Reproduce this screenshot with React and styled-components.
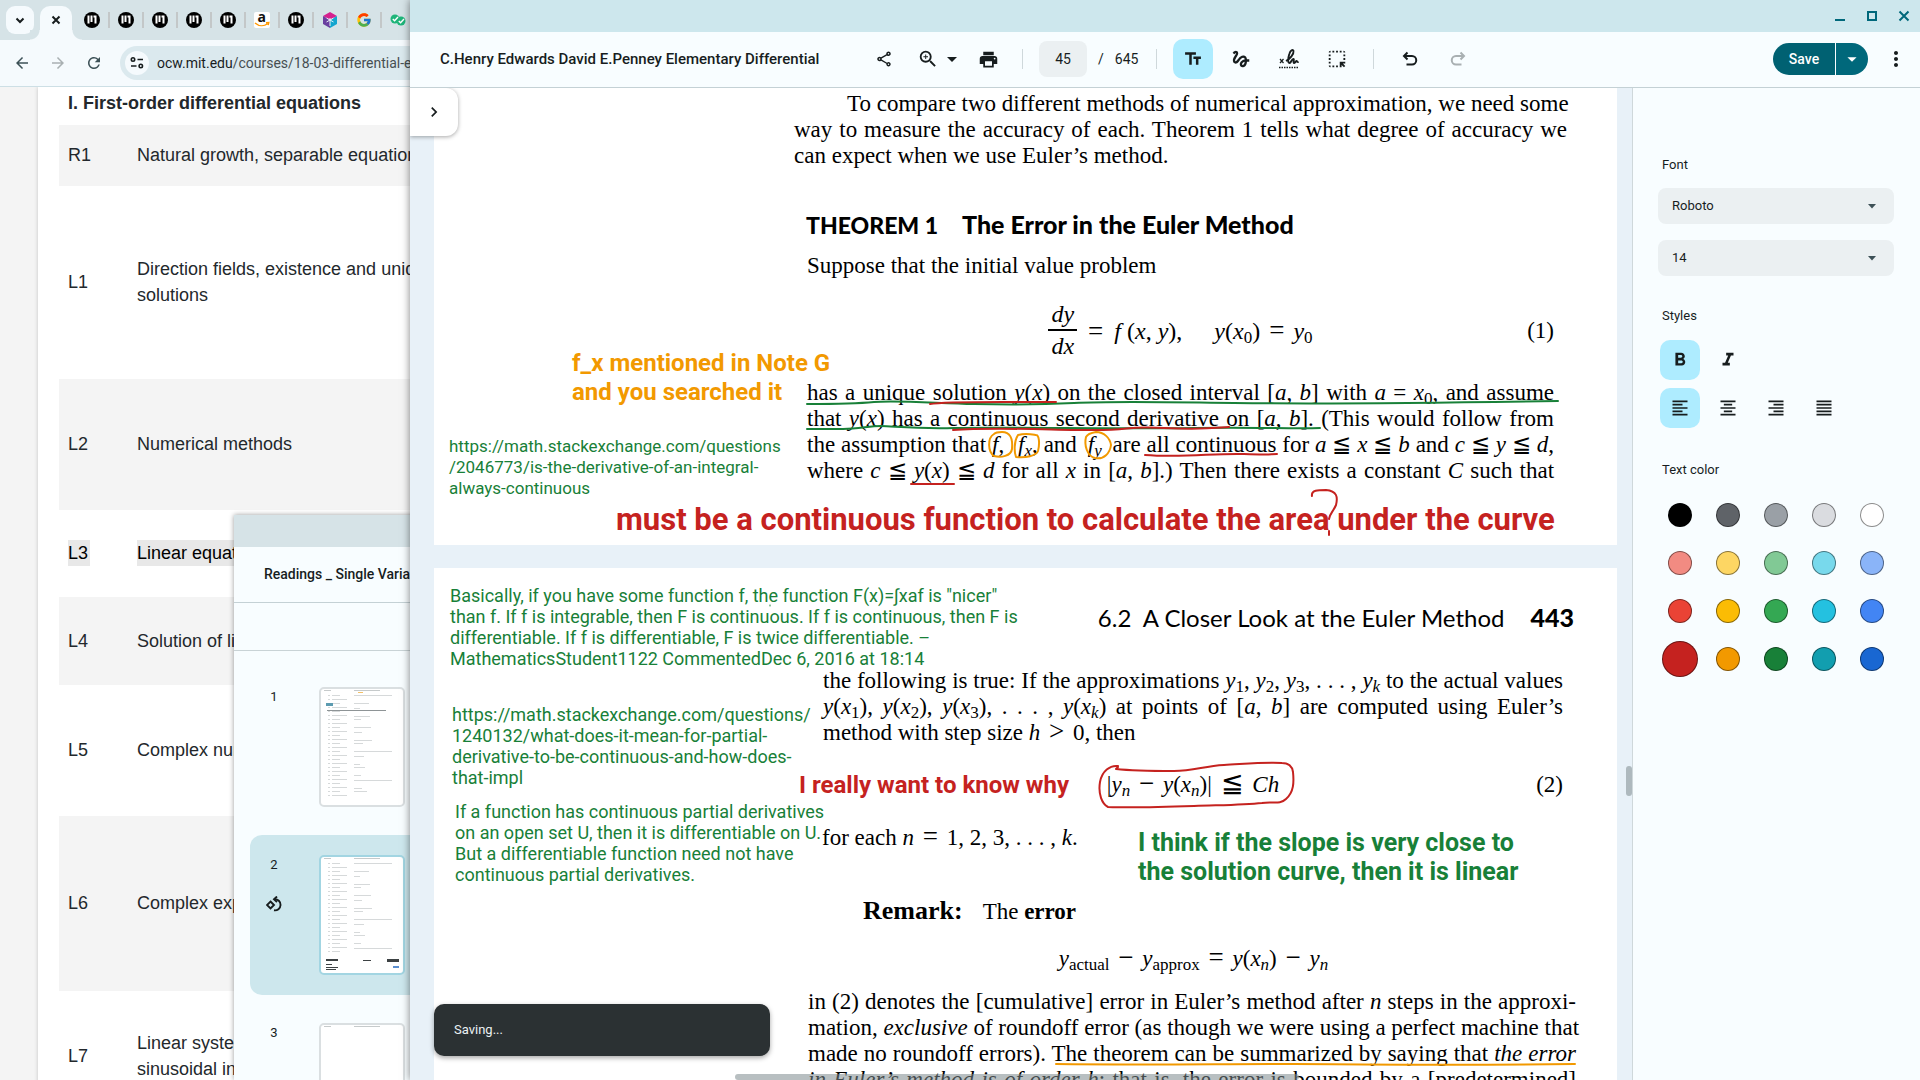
import React from "react";
import styled, { createGlobalStyle } from "styled-components";
import {
  MdOutlineShare, MdZoomIn, MdArrowDropDown, MdPrint, MdTextFields, MdGesture,
  MdHighlightAlt, MdFormatBold, MdFormatItalic, MdFormatAlignLeft, MdFormatAlignCenter,
  MdFormatAlignRight, MdFormatAlignJustify, MdMoreVert,
  MdArrowBack, MdArrowForward, MdRefresh, MdChevronRight,
} from "react-icons/md";
import { FcGoogle } from "react-icons/fc";

const UI = `Roboto, "Noto Sans", sans-serif`;
const SERIF = `"Liberation Serif", "DejaVu Serif", serif`;
const GREEN = "#188038";
const RED = "#c5221f";
const ORANGE = "#f29900";

const Global = createGlobalStyle`
  *, *::before, *::after { box-sizing: border-box; }
  body { margin: 0; overflow: hidden; font-family: ${UI}; color: #171d1e; }
  button, input, select { font: inherit; color: inherit; }
  button { border: 0; background: none; padding: 0; cursor: pointer; }
`;

const Desktop = styled.div`
  position: relative;
  height: 100vh;
  overflow: hidden;
  background: #f4f4f4;
`;

/* ---------- browser window ---------- */

const Browser = styled.section`
  position: absolute;
  inset: 0;
  display: flex;
  flex-direction: column;
`;

const TabStrip = styled.div`
  display: flex;
  align-items: flex-end;
  height: 40px;
  padding-left: 6px;
  background: #d6e3e7;
`;

const TabSearch = styled.button`
  display: grid;
  place-items: center;
  width: 28px;
  height: 28px;
  margin: 0 6px 6px 0;
  border-radius: 9px;
  background: #f5fafd;
`;

const ActiveTab = styled.button`
  position: relative;
  display: grid;
  place-items: center;
  width: 32px;
  height: 34px;
  padding-bottom: 6px;
  border-radius: 10px 10px 0 0;
  background: #f5fafd;
  &::before, &::after {
    content: "";
    position: absolute;
    bottom: 0;
    width: 10px;
    height: 10px;
  }
  &::before { left: -10px; background: radial-gradient(circle at 0 0, #d6e3e7 9px, #f5fafd 10px); }
  &::after { right: -10px; background: radial-gradient(circle at 100% 0, #d6e3e7 9px, #f5fafd 10px); }
`;

const Tab = styled.button`
  display: flex;
  align-items: center;
  justify-content: space-between;
  width: 34px;
  height: 16px;
  margin-bottom: 12px;
  padding-left: 8px;
  flex: none;
  &::after { content: ""; width: 2px; height: 16px; background: #c3c7c8; }
`;

const Tabs = styled.div`
  display: flex;
  padding-left: 4px;
`;

const NavBar = styled.div`
  display: flex;
  align-items: center;
  gap: 16px;
  height: 47px;
  padding: 0 8px 0 12px;
  background: #f5fafd;
  border-bottom: 1px solid #cddfe5;
`;

const NavButton = styled.button`
  display: grid;
  place-items: center;
  width: 20px;
  height: 20px;
  color: ${(p) => (p.$dim ? "#a9b0b2" : "#3d5157")};
`;

const Omnibox = styled.div`
  display: flex;
  flex: 1;
  align-items: center;
  gap: 8px;
  height: 34px;
  padding-left: 5px;
  border-radius: 17px;
  background: #dbe9ee;
`;

const SiteInfo = styled.button`
  display: grid;
  place-items: center;
  width: 24px;
  height: 24px;
  border-radius: 50%;
  background: #f5fafd;
`;

const Url = styled.div`
  font-size: 14px;
  line-height: 20px;
  color: #474f52;
  b { font-weight: 400; color: #171d1e; }
`;

const WebPage = styled.main`
  flex: 1;
  overflow: hidden;
  padding-left: 38px;
  background: #f4f4f4;
`;

const Sheet = styled.div`
  min-height: 100%;
  padding-left: 21px;
  background: #fff;
  box-shadow: 0 0 4px rgba(0, 0, 0, 0.2);
`;

const Syllabus = styled.table`
  width: 100%;
  border-collapse: collapse;
  font: 18px/26px "Liberation Sans", Arial, sans-serif;
  color: #23282c;
  th { height: 38px; padding: 0 9px 6px; text-align: left; font-weight: 700; }
  td { padding: 0 9px 1px; }
  td:first-child { width: 69px; }
`;

const Session = styled.tr`
  height: ${(p) => p.$height}px;
  background: ${(p) => (p.$shaded ? "#f4f4f4" : "#fff")};
`;

const Mark = styled.span`
  display: inline-block;
  padding-right: ${(p) => (p.$on ? 2 : 0)}px;
  background: ${(p) => (p.$on ? "#e8e8e8" : "none")};
  color: ${(p) => (p.$on ? "#000" : "inherit")};
`;

/* ---------- background document viewer ---------- */

const ReadingsWindow = styled.section`
  position: absolute;
  left: 234px;
  right: 800px;
  top: 515px;
  bottom: 0;
  display: flex;
  flex-direction: column;
  overflow: hidden;
  background: #f8fdff;
  box-shadow: 0 0 5px rgba(0, 0, 0, 0.4);
`;

const ReadingsFrame = styled.div`
  height: 32px;
  flex: none;
  background: #d6e3e7;
`;

const ReadingsTitle = styled.header`
  height: 56px;
  flex: none;
  padding: 17px 30px;
  font-size: 14px;
  line-height: 20px;
  font-weight: 500;
  border-bottom: 1px solid #c4d1d5;
`;

const ReadingsTools = styled.div`
  height: 48px;
  flex: none;
  margin-bottom: 16px;
  border-bottom: 1px solid #c9d3d6;
`;

const ThumbRow = styled.button`
  display: flex;
  align-items: flex-start;
  flex: none;
  gap: 37px;
  height: 160px;
  margin: 0 16px 8px;
  padding: 20px 16px;
  border-radius: 12px;
  background: ${(p) => (p.$selected ? "#cde7ed" : "none")};
`;

const ThumbSide = styled.div`
  display: flex;
  flex-direction: column;
  align-items: center;
  gap: 21px;
  width: 16px;
  font-size: 13px;
  line-height: 20px;
`;

const Thumb = styled.div`
  width: 86px;
  height: 120px;
  border: 2px solid ${(p) => (p.$selected ? "#a2d5e2" : "#dadfe1")};
  border-radius: 5px;
  background: #fff;
  overflow: hidden;
`;

/* ---------- foreground document viewer ---------- */

const Viewer = styled.section`
  position: absolute;
  left: 410px;
  right: 0;
  top: 0;
  bottom: 0;
  display: flex;
  flex-direction: column;
  background: #f8fdff;
  box-shadow: 0 0 8px rgba(0, 0, 0, 0.5);
`;

const TitleBar = styled.div`
  display: flex;
  justify-content: flex-end;
  align-items: center;
  gap: 16px;
  height: 32px;
  padding-right: 8px;
  background: #cde7ed;
  color: #00687b;
`;

const WindowButton = styled.button`
  display: grid;
  place-items: center;
  width: 16px;
  height: 16px;
`;

const Toolbar = styled.header`
  display: flex;
  align-items: center;
  height: 56px;
  padding: 0 12px 1px 30px;
  border-bottom: 1px solid #c4d1d5;
`;

const DocTitle = styled.h1`
  width: 432px;
  margin: 0;
  font-size: 15px;
  line-height: 20px;
  font-weight: 500;
`;

const ToolGroup = styled.div`
  display: flex;
  align-items: center;
  gap: ${(p) => p.$gap}px;
`;

const Tool = styled.button`
  display: grid;
  place-items: center;
  width: ${(p) => p.$width || 24}px;
  height: 40px;
  border-radius: 10px;
  background: ${(p) => (p.$active ? "#aeecff" : "none")};
  color: ${(p) => (p.$dim ? "#a9b0b2" : "#171d1e")};
`;

const Divider = styled.span`
  width: 1px;
  height: 20px;
  margin: 0 ${(p) => p.$after}px 0 ${(p) => p.$before}px;
  background: #cfd8db;
`;

const PageCount = styled.label`
  display: flex;
  align-items: center;
  gap: 11px;
  font-size: 14px;
  line-height: 20px;
`;

const PageInput = styled.input`
  width: 48px;
  height: 36px;
  border: 0;
  border-radius: 8px;
  background: #ebf0f2;
  text-align: center;
`;

const SaveGroup = styled.div`
  display: flex;
  gap: 1px;
  margin-left: auto;
  margin-right: 16px;
`;

const SaveButton = styled.button`
  display: grid;
  place-items: center;
  width: ${(p) => (p.$menu ? 32 : 62)}px;
  height: 32px;
  border-radius: ${(p) => (p.$menu ? "0 16px 16px 0" : "16px 0 0 16px")};
  background: ${(p) => (p.$menu ? "#00687b" : "#006172")};
  color: #fff;
  font-size: 14px;
  font-weight: 500;
`;

const Body = styled.div`
  display: flex;
  flex: 1;
  min-height: 0;
`;

const Canvas = styled.main`
  position: relative;
  flex: 1;
  display: flex;
  flex-direction: column;
  gap: 23px;
  overflow: hidden;
  padding: 0 15px 0 24px;
  background: #e8f1f8;
`;

const PanelToggle = styled.button`
  position: absolute;
  left: 0;
  top: 0;
  display: grid;
  place-items: center;
  width: 48px;
  height: 48px;
  border-radius: 0 12px 12px 0;
  background: #fff;
  box-shadow: 0 1px 4px rgba(0, 0, 0, 0.35);
`;

const ScrollThumb = styled.div`
  position: absolute;
  border-radius: 3px;
  background: rgba(125, 138, 142, 0.55);
`;

const VThumb = styled(ScrollThumb)`
  right: 0;
  top: 678px;
  width: 6px;
  height: 30px;
`;

const HThumb = styled(ScrollThumb)`
  left: 325px;
  bottom: 0;
  width: 564px;
  height: 6px;
`;

const Snackbar = styled.div`
  position: absolute;
  left: 24px;
  bottom: 24px;
  width: 336px;
  padding: 16px 20px;
  border-radius: 10px;
  background: #2b3133;
  color: #ecf2f4;
  font-size: 13px;
  line-height: 20px;
  box-shadow: 0 2px 5px rgba(0, 0, 0, 0.35);
`;

/* ---------- printed pages ---------- */

const Page = styled.article`
  position: relative;
  flex: none;
  display: flow-root;
  padding-bottom: ${(p) => p.$bottom || 0}px;
  background: #fff;
  color: #000;
  font: 23px/26px ${SERIF};
`;

const Block = styled.div`
  margin: ${(p) => p.$top}px ${(p) => p.$right}px 0 ${(p) => p.$left}px;
`;

const Line = styled.p`
  margin: 0;
  padding-left: ${(p) => p.$indent || 0}px;
  white-space: nowrap;
  text-align: left;
  text-align-last: ${(p) => (p.$ragged ? "left" : "justify")};
  sub { font-size: 17px; line-height: 0; vertical-align: -4px; }
`;

const Ringed = styled.span`
  padding: 0 ${(p) => p.$space}px;
`;

const Op = styled.span`
  padding: 0 3px;
  font-size: 27px;
  line-height: 0;
`;

const TheoremTitle = styled.h2`
  display: flex;
  align-items: baseline;
  gap: 24px;
  margin: 0;
  font: 900 25px/26px Lato, sans-serif;
  span:first-child { font-size: 23px; }
`;

const RunningHead = styled.header`
  display: flex;
  justify-content: flex-end;
  align-items: baseline;
  gap: 26px;
  font: 400 24px/26px Lato, sans-serif;
  span { white-space: pre; }
  b { font-size: 25px; font-weight: 900; }
`;

const Equation = styled.div`
  display: grid;
  grid-template-columns: 1fr auto 1fr;
  align-items: center;
  min-height: 26px;
  > :first-child { grid-column: 2; }
  > :last-child:not(:first-child) { justify-self: end; }
  sub { font-size: 17px; line-height: 0; vertical-align: -4px; }
`;

const Formula = styled.div`
  display: flex;
  align-items: center;
  gap: 8px;
  white-space: nowrap;
  font-size: ${(p) => (p.$large ? 24 : 23)}px;
`;

const Fraction = styled.span`
  display: flex;
  flex-direction: column;
  align-items: center;
  font-style: italic;
  line-height: 31px;
  span:first-child { border-bottom: 2px solid #000; line-height: 29px; padding: 0 3px; }
`;

const Spaced = styled.span`
  padding-left: 24px;
`;

const Remark = styled.p`
  display: flex;
  align-items: baseline;
  gap: 20px;
  margin: 0 0 0 41px;
  > b { font-size: 26px; }
`;

/* ---------- annotations over the pages ---------- */

const Note = styled.div`
  position: absolute;
  left: ${(p) => p.$x}px;
  top: ${(p) => p.$y}px;
  color: ${(p) => p.$color || GREEN};
  font-family: ${UI};
  font-size: ${(p) => p.$size || 18}px;
  line-height: ${(p) => (p.$size > 30 ? 36 : p.$size > 20 ? 29 : 21)}px;
  font-weight: ${(p) => (p.$size > 20 ? 700 : 400)};
  white-space: pre;
`;

const Ink = styled.svg`
  position: absolute;
  left: 0;
  top: 0;
  width: 1183px;
  height: 100%;
  pointer-events: none;
  fill: none;
  stroke-width: 2;
  stroke-linecap: round;
  stroke-linejoin: round;
`;

/* ---------- formatting panel ---------- */

const Panel = styled.aside`
  width: 288px;
  flex: none;
  padding: 67px 26px 0 25px;
  border-left: 1px solid #cfd8db;
  background: #f8fdff;
  font-size: 13px;
  line-height: 20px;
`;

const PanelLabel = styled.div`
  display: block;
  margin: 0 0 ${(p) => p.$after}px 4px;
`;

const SelectWrap = styled.div`
  position: relative;
  margin-bottom: ${(p) => p.$after}px;
`;

const Select = styled.select`
  appearance: none;
  display: block;
  width: 100%;
  height: 36px;
  padding: 0 14px;
  border: 0;
  border-radius: 8px;
  background: #ebf0f2;
`;

const CaretIcon = styled.svg`
  position: absolute;
  right: 18px;
  bottom: 15px;
  pointer-events: none;
  color: #3d5157;
`;

const StyleRow = styled.div`
  display: flex;
  gap: 8px;
  margin: 0 0 ${(p) => p.$after}px 2px;
`;

const Swatches = styled.fieldset`
  display: grid;
  grid-template-columns: repeat(5, 48px);
  grid-auto-rows: 48px;
  margin: 0 0 0 -2px;
  padding: 0;
  border: 0;
  place-items: center;
`;

const Swatch = styled.input`
  appearance: none;
  width: 24px;
  height: 24px;
  margin: 0;
  border: 1px solid rgba(0, 0, 0, 0.45);
  border-radius: 50%;
  background: ${(p) => p.$color};
  &:checked { width: 36px; height: 36px; }
`;

/* ---------- drawings ---------- */

const Caret = () => (
  <CaretIcon width="8" height="5" viewBox="0 0 8 5" fill="currentColor"><path d="M0 0h8L4 4.500z" /></CaretIcon>
);

const OcwIcon = () => (
  <svg width="16" height="16" viewBox="0 0 16 16">
    <circle cx="8" cy="8" r="8" fill="#000" />
    <path d="M3.500 3.500h2v8h-2zM6.500 3.500h2v6.500h-2zM9.500 3.500h3v8h-2v-6h-1z" fill="#fff" />
  </svg>
);

const AmazonIcon = () => (
  <svg width="16" height="16" viewBox="0 0 16 16">
    <rect width="16" height="16" rx="2" fill="#fff" />
    <text x="3.500" y="10" fontFamily="Open Sans, sans-serif" fontWeight="700" fontSize="14" fill="#111">a</text>
    <path d="M1 11c4 3.400 9 3.400 12.500.8M12 10.800l2.800-.3-.6 2.700" fill="none" stroke="#ff9900" strokeWidth="1.400" />
  </svg>
);

const CubeIcon = () => (
  <svg width="16" height="16" viewBox="0 0 16 16">
    <path d="M8 0l7 4-7 4-7-4z" fill="#d6218f" />
    <path d="M1 4l7 4v8l-7-4z" fill="#6a3fa0" />
    <path d="M15 4l-7 4v8l7-4z" fill="#12a5cf" />
    <path d="M8 6v8M4.500 6l7 4M11.500 6l-7 4" stroke="#e9f3f6" strokeWidth="1" />
  </svg>
);

const ChecksIcon = () => (
  <svg width="16" height="16" viewBox="0 0 16 16" fill="#1fb57a">
    <circle cx="5" cy="7" r="4.500" />
    <circle cx="11" cy="9" r="4.500" />
    <path d="M2.800 7l1.800 1.800L8 5M8.800 9l1.800 1.800L14 7" fill="none" stroke="#fff" strokeWidth="1.400" />
  </svg>
);

const StrokeIcon = ({ size = 16, width = 2, children }) => (
  <svg width={size} height={size} viewBox="0 0 16 16" fill="none" stroke="currentColor" strokeWidth={width}>
    {children}
  </svg>
);

const RotateIcon = () => (
  <StrokeIcon width={1.9}>
    <path d="M4.500 5.500L8 9l-3.500 3.500L1 9z" />
    <path d="M8.500 3.200a5.600 5.600 0 1 1-.5 11.100" />
    <path d="M11 .5L8 3.300 11 6" />
  </StrokeIcon>
);

const SignatureIcon = () => (
  <svg width="20" height="22" viewBox="0 0 20 22" fill="none" stroke="currentColor">
    <path d="M1 11l3.500 4M4.500 11L1 15" strokeWidth="1.200" />
    <path d="M7 13c4-2 8-7 7.500-10C14 1 11.500 2 10.300 6 9 10 8.500 15 10.500 15c1.800 0 2-4 3.800-4 1.500 0-.8 4 1 4 1 0 1.500-2 2.300-2 .7 0 .5 1.500 2 1" strokeWidth="1.900" />
    <path d="M0 19.500h20" strokeWidth="1.500" strokeDasharray="1.500 1" />
  </svg>
);

const ThumbLines = ({ seed, count }) => (
  <svg width="82" height="116" viewBox="0 0 82 116" fill="#c6cacb">
    <path d="M3 1h7v1H3zM33 1h26v1H33z" />
    {Array.from({ length: count }, (_, i) => {
      const y = 6 + i * 4;
      const a = 8 + ((i * seed * 7) % 14);
      const b = (i * 3) % 7 === 0 ? 38 : 5 + ((i * 5) % 14);
      return (
        <g key={i} opacity="0.7">
          <rect x="7" y={y} width="2" height="1" />
          <rect x="11" y={y} width={a} height="1" />
          {i % 3 !== 1 && <rect x="33" y={y + (i % 2)} width={b} height="1" />}
        </g>
      );
    })}
    {seed === 3 && <path d="M5 14h7v3H5z" fill="#5c9bb0" />}
    {seed === 3 && <path d="M37 3h5v1h-5z" fill="#f3c169" />}
    {seed === 3 && <path d="M6 21h59v1H6z" fill="#8e9496" />}
    {seed === 5 && <path d="M5 102h12v2H5zM66 102h12v3H66zM42 103h8v1h-8zM5 107h6v1H5zM5 110h12v1H5zM5 112h10v1H5z" fill="#3c4143" />}
    {seed === 5 && <path d="M72 109h6v2h-6z" fill="#5b8fd0" />}
  </svg>
);

/* ---------- data ---------- */

const TABS = [OcwIcon, OcwIcon, OcwIcon, OcwIcon, OcwIcon, AmazonIcon, OcwIcon, CubeIcon, FcGoogle, ChecksIcon];

const SESSIONS = [
  ["R1", ["Natural growth, separable equations"], 61],
  ["L1", ["Direction fields, existence and uniqueness of", "solutions"], 193],
  ["L2", ["Numerical methods"], 131],
  ["L3", ["Linear equations, models"], 87],
  ["L4", ["Solution of linear equations, integrating factors"], 88],
  ["L5", ["Complex numbers, roots of unity"], 131],
  ["L6", ["Complex exponentials; sinusoidal functions"], 175],
  ["L7", ["Linear system response to exponential and", "sinusoidal input; gain, phase lag"], 131],
];

const COLORS = [
  ["Black", "#000000"], ["Dark gray", "#5f6368"], ["Gray", "#9aa0a6"], ["Light gray", "#dadce0"], ["White", "#ffffff"],
  ["Light red", "#f28b82"], ["Light yellow", "#fdd663"], ["Light green", "#81c995"], ["Light cyan", "#78d9ec"], ["Light blue", "#8ab4f8"],
  ["Red", "#ea4335"], ["Yellow", "#fbbc04"], ["Green", "#34a853"], ["Cyan", "#24c1e0"], ["Blue", "#4285f4"],
  ["Dark red", "#c5221f"], ["Orange", "#f29900"], ["Dark green", "#188038"], ["Dark cyan", "#129eaf"], ["Dark blue", "#1967d2"],
];

const ALIGNMENTS = [
  ["Align left", MdFormatAlignLeft], ["Align center", MdFormatAlignCenter],
  ["Align right", MdFormatAlignRight], ["Justify", MdFormatAlignJustify],
];

/* ---------- composition ---------- */

function BrowserWindow() {
  return (
    <Browser>
      <TabStrip>
        <TabSearch aria-label="Search tabs"><StrokeIcon><path d="M4.500 6.500L8 10l3.500-3.500" /></StrokeIcon></TabSearch>
        <ActiveTab aria-label="Close tab"><StrokeIcon><path d="M4.500 4.500l7 7M11.500 4.500l-7 7" /></StrokeIcon></ActiveTab>
        <Tabs>
          {TABS.map((Icon, i) => <Tab key={i} aria-label={`Tab ${i + 1}`}><Icon size={16} /></Tab>)}
        </Tabs>
      </TabStrip>
      <NavBar>
        <NavButton aria-label="Back"><MdArrowBack size={18} /></NavButton>
        <NavButton aria-label="Forward" $dim><MdArrowForward size={18} /></NavButton>
        <NavButton aria-label="Reload"><MdRefresh size={18} /></NavButton>
        <Omnibox>
          <SiteInfo aria-label="Site information">
            <StrokeIcon width={1.6}>
              <circle cx="4" cy="4.500" r="1.700" /><path d="M8.500 4.500H14M2 11h5.500" /><circle cx="11.800" cy="11" r="1.700" />
            </StrokeIcon>
          </SiteInfo>
          <Url><b>ocw.mit.edu</b>/courses/18-03-differential-equations</Url>
        </Omnibox>
      </NavBar>
      <WebPage>
        <Sheet>
          <Syllabus>
            <thead><tr><th colSpan="2">I. First-order differential equations</th></tr></thead>
            <tbody>
              {SESSIONS.map(([id, lines, height], i) => (
                <Session key={id} $height={height} $shaded={i % 2 === 0}>
                  <td><Mark $on={id === "L3"}>{id}</Mark></td>
                  <td>{lines.map((l) => <div key={l}><Mark $on={id === "L3"}>{l}</Mark></div>)}</td>
                </Session>
              ))}
            </tbody>
          </Syllabus>
        </Sheet>
      </WebPage>
    </Browser>
  );
}

function Readings() {
  return (
    <ReadingsWindow>
      <ReadingsFrame />
      <ReadingsTitle>Readings _ Single Variable Calculus</ReadingsTitle>
      <ReadingsTools />
      <ThumbRow>
        <ThumbSide>1</ThumbSide>
        <Thumb><ThumbLines seed={3} count={26} /></Thumb>
      </ThumbRow>
      <ThumbRow $selected>
        <ThumbSide>2<RotateIcon /></ThumbSide>
        <Thumb $selected><ThumbLines seed={5} count={23} /></Thumb>
      </ThumbRow>
      <ThumbRow>
        <ThumbSide>3</ThumbSide>
        <Thumb><ThumbLines seed={1} count={0} /></Thumb>
      </ThumbRow>
    </ReadingsWindow>
  );
}

function PageOne() {
  return (
    <Page $bottom={61}>
      <Block $top={3} $right={50} $left={360}>
        <Line $indent={53}>To compare two different methods of numerical approximation, we need some</Line>
        <Line>way to measure the accuracy of each. Theorem 1 tells what degree of accuracy we</Line>
        <Line $ragged>can expect when we use Euler’s method.</Line>
      </Block>
      <Block $top={42} $right={63} $left={372}>
        <TheoremTitle><span>THEOREM 1</span><span>The Error in the Euler Method</span></TheoremTitle>
      </Block>
      <Block $top={15} $right={63} $left={373}>
        <Line $ragged>Suppose that the initial value problem</Line>
      </Block>
      <Block $top={21} $right={63} $left={373}>
        <Equation>
          <Formula $large>
            <Fraction><span>dy</span><span>dx</span></Fraction>
            <Op>=</Op>
            <span><i>f</i> (<i>x</i>, <i>y</i>),</span>
            <Spaced><i>y</i>(<i>x</i><sub>0</sub>) <Op>=</Op> <i>y</i><sub>0</sub></Spaced>
          </Formula>
          <span>(1)</span>
        </Equation>
      </Block>
      <Block $top={18} $right={63} $left={373}>
        <Line>has a unique solution <i>y</i>(<i>x</i>) on the closed interval [<i>a</i>, <i>b</i>] with <i>a</i> = <i>x</i><sub>0</sub>, and assume</Line>
        <Line>that <i>y</i>(<i>x</i>) has a continuous second derivative on [<i>a</i>, <i>b</i>]. (This would follow from</Line>
        <Line>the assumption that <i>f</i>,<Ringed $space={4} /> <i>f<sub>x</sub></i>, and <Ringed $space={5}><i>f<sub>y</sub></i></Ringed> are all continuous for <i>a</i> ≦ <i>x</i> ≦ <i>b</i> and <i>c</i> ≦ <i>y</i> ≦ <i>d</i>,</Line>
        <Line>where <i>c</i> ≦ <i>y</i>(<i>x</i>) ≦ <i>d</i> for all <i>x</i> in [<i>a</i>, <i>b</i>].) Then there exists a constant <i>C</i> such that</Line>
      </Block>
      <Note $x={138} $y={261} $size={24} $color={ORANGE}>{"f_x mentioned in Note G\nand you searched it"}</Note>
      <Note $x={15} $y={348} $size={17}>{"https://math.stackexchange.com/questions\n/2046773/is-the-derivative-of-an-integral-\nalways-continuous"}</Note>
      <Note $x={182} $y={414} $size={31} $color={RED}>must be a continuous function to calculate the area under the curve</Note>
      <Ink>
        <g stroke={GREEN}>
          <path d="M373 316C400 316 420 316 440 314S500 315 540 316 600 317 640 315 720 314 800 315 1000 315 1124 313" />
          <path d="M373 341h36C425 341 435 338 447 338S480 341 520 340 700 341 760 340 860 341 886 340" />
        </g>
        <g stroke={RED}>
          <path d="M496 316C510 313 560 314 622 314" />
          <path d="M519 342C560 339 620 342 660 342S690 338 730 340 780 340 795 339" />
          <path d="M711 367C750 370 780 365 810 366S835 366 843 366" />
          <path d="M477 396h43" />
          <path d="M878 408C877 402 884 402 892 402 903 403 904 409 902 417 899 424 896 425 895 431M895 443v4" />
        </g>
        <g stroke={ORANGE}>
          <path d="M560 346C553 350 554 364 560 368 567 370 577 368 578 361 579 350 576 344 568 344 564 344 562 344 560 346z" />
          <path d="M584 347C580 353 580 364 582 369 592 370 602 368 604 363 606 355 605 347 602 347 596 346 592 345 584 347z" />
          <path d="M652 349C650 357 653 368 661 370 670 372 676 365 677 357 676 350 670 344 662 344 656 345 653 347 652 349z" />
        </g>
      </Ink>
    </Page>
  );
}

function PageTwo() {
  return (
    <Page>
      <Block $top={36} $right={43} $left={388}>
        <RunningHead><span>{"6.2  A Closer Look at the Euler Method"}</span><b>443</b></RunningHead>
      </Block>
      <Block $top={37} $right={54} $left={389}>
        <Line>the following is true: If the approximations <i>y</i><sub>1</sub>, <i>y</i><sub>2</sub>, <i>y</i><sub>3</sub>, . . . , <i>y<sub>k</sub></i> to the actual values</Line>
        <Line><i>y</i>(<i>x</i><sub>1</sub>), <i>y</i>(<i>x</i><sub>2</sub>), <i>y</i>(<i>x</i><sub>3</sub>), . . . , <i>y</i>(<i>x<sub>k</sub></i>) at points of [<i>a</i>, <i>b</i>] are computed using Euler’s</Line>
        <Line $ragged>method with step size <i>h</i> <Op>&gt;</Op> 0, then</Line>
      </Block>
      <Block $top={26} $right={54} $left={389}>
        <Equation>
          <Formula>
            <span>|<i>y<sub>n</sub></i> <Op>−</Op> <i>y</i>(<i>x<sub>n</sub></i>)| <Op>≦</Op> <i>Ch</i></span>
          </Formula>
          <span>(2)</span>
        </Equation>
      </Block>
      <Block $top={27} $right={54} $left={388}>
        <Line $ragged>for each <i>n</i> <Op>=</Op> 1, 2, 3, . . . , <i>k</i>.</Line>
      </Block>
      <Block $top={47} $right={54} $left={388}>
        <Remark><b>Remark:</b><span>The <b>error</b></span></Remark>
      </Block>
      <Block $top={21} $right={54} $left={390}>
        <Equation>
          <Formula>
            <span><i>y</i><sub>actual</sub> <Op>−</Op> <i>y</i><sub>approx</sub> <Op>=</Op> <i>y</i>(<i>x<sub>n</sub></i>) <Op>−</Op> <i>y<sub>n</sub></i></span>
          </Formula>
        </Equation>
      </Block>
      <Block $top={17} $right={41} $left={374}>
        <Line>in (2) denotes the [cumulative] error in Euler’s method after <i>n</i> steps in the approxi-</Line>
        <Line>mation, <i>exclusive</i> of roundoff error (as though we were using a perfect machine that</Line>
        <Line>made no roundoff errors). The theorem can be summarized by saying that <i>the error</i></Line>
        <Line><i>in Euler’s method is of order h</i>; that is, the error is bounded by a [predetermined]</Line>
      </Block>
      <Note $x={16} $y={17}>{"Basically, if you have some function f, the function F(x)=∫xaf is \"nicer\"\nthan f. If f is integrable, then F is continuous. If f is continuous, then F is\ndifferentiable. If f is differentiable, F is twice differentiable. –\nMathematicsStudent1122 CommentedDec 6, 2016 at 18:14"}</Note>
      <Note $x={18} $y={136}>{"https://math.stackexchange.com/questions/\n1240132/what-does-it-mean-for-partial-\nderivative-to-be-continuous-and-how-does-\nthat-impl"}</Note>
      <Note $x={21} $y={233}>{"If a function has continuous partial derivatives\non an open set U, then it is differentiable on U.\nBut a differentiable function need not have\ncontinuous partial derivatives."}</Note>
      <Note $x={365} $y={203} $size={24} $color={RED}>I really want to know why</Note>
      <Note $x={704} $y={260} $size={25}>{"I think if the slope is very close to\nthe solution curve, then it is linear"}</Note>
      <Ink>
        <path stroke={RED} d="M684 198C676 197 668 203 666 214 664 226 668 236 674 239 700 240 730 239 760 238S810 237 828 235C838 233 846 237 852 231 860 224 860 214 859 204 858 197 854 195 848 195 830 194 810 196 790 197S760 203 740 203C720 203 700 203 682 201L684 199" />
        <path stroke={ORANGE} d="M622 496C700 497 780 496 860 496S980 498 1141 496" />
        <path stroke={GREEN} strokeWidth="1" d="M336 37v1" />
      </Ink>
    </Page>
  );
}

function FormatPanel() {
  return (
    <Panel>
      <PanelLabel as="label" htmlFor="font" $after={13}>Font</PanelLabel>
      <SelectWrap $after={16}>
        <Select id="font" defaultValue="Roboto"><option>Roboto</option></Select>
        <Caret />
      </SelectWrap>
      <SelectWrap $after={30}>
        <Select aria-label="Font size" defaultValue="14"><option>14</option></Select>
        <Caret />
      </SelectWrap>
      <PanelLabel $after={14}>Styles</PanelLabel>
      <StyleRow $after={8}>
        <Tool $width={40} $active aria-label="Bold"><MdFormatBold size={22} /></Tool>
        <Tool $width={40} aria-label="Italic"><MdFormatItalic size={22} /></Tool>
      </StyleRow>
      <StyleRow $after={32}>
        {ALIGNMENTS.map(([name, Icon], i) => (
          <Tool key={name} $width={40} $active={i === 0} aria-label={name}><Icon size={20} /></Tool>
        ))}
      </StyleRow>
      <PanelLabel $after={11}>Text color</PanelLabel>
      <Swatches aria-label="Text color">
        {COLORS.map(([name, color]) => (
          <Swatch key={name} type="radio" name="color" aria-label={name} $color={color} defaultChecked={name === "Dark red"} />
        ))}
      </Swatches>
    </Panel>
  );
}

function ViewerWindow() {
  return (
    <Viewer>
      <TitleBar>
        <WindowButton aria-label="Minimize"><StrokeIcon><path d="M3 12h10" /></StrokeIcon></WindowButton>
        <WindowButton aria-label="Maximize"><StrokeIcon><path d="M4 4h8v8H4z" /></StrokeIcon></WindowButton>
        <WindowButton aria-label="Close"><StrokeIcon><path d="M3.500 3.500l9 9M12.500 3.500l-9 9" /></StrokeIcon></WindowButton>
      </TitleBar>
      <Toolbar>
        <DocTitle>C.Henry Edwards David E.Penney Elementary Differential</DocTitle>
        <ToolGroup $gap={20}>
          <Tool aria-label="Share"><MdOutlineShare size={18} /></Tool>
          <Tool aria-label="Zoom"><MdZoomIn size={22} /></Tool>
        </ToolGroup>
        <ToolGroup $gap={12}>
          <Tool aria-label="Zoom levels"><MdArrowDropDown size={24} /></Tool>
          <Tool aria-label="Print"><MdPrint size={21} /></Tool>
        </ToolGroup>
        <Divider $before={22} $after={16} />
        <PageCount><PageInput aria-label="Page" defaultValue="45" /><span>/</span><span>645</span></PageCount>
        <Divider $before={18} $after={16} />
        <ToolGroup $gap={8}>
          <Tool $width={40} $active aria-label="Text"><MdTextFields size={20} /></Tool>
          <Tool $width={40} aria-label="Draw"><MdGesture size={22} /></Tool>
          <Tool $width={40} aria-label="Signature"><SignatureIcon /></Tool>
          <Tool $width={40} aria-label="Select area"><MdHighlightAlt size={22} /></Tool>
        </ToolGroup>
        <Divider $before={16} $after={24} />
        <ToolGroup $gap={24}>
          <Tool aria-label="Undo"><StrokeIcon width={2}><path d="M5.500 1.500L2 5l3.500 3.500M2.500 5H10a4 4 0 0 1 0 8.500H4.500" /></StrokeIcon></Tool>
          <Tool aria-label="Redo" $dim><StrokeIcon width={2}><path d="M10.500 1.500L14 5l-3.500 3.500M13.500 5H6a4 4 0 0 0 0 8.500h5.500" /></StrokeIcon></Tool>
        </ToolGroup>
        <SaveGroup>
          <SaveButton>Save</SaveButton>
          <SaveButton $menu aria-label="Save options"><MdArrowDropDown size={22} /></SaveButton>
        </SaveGroup>
        <Tool aria-label="More"><MdMoreVert size={24} /></Tool>
      </Toolbar>
      <Body>
        <Canvas>
          <PageOne />
          <PageTwo />
          <PanelToggle aria-label="Show pages"><MdChevronRight size={20} /></PanelToggle>
          <HThumb />
          <VThumb />
          <Snackbar role="status">Saving...</Snackbar>
        </Canvas>
        <FormatPanel />
      </Body>
    </Viewer>
  );
}

export default function App() {
  return (
    <>
      <Global />
      <Desktop>
        <BrowserWindow />
        <Readings />
        <ViewerWindow />
      </Desktop>
    </>
  );
}
